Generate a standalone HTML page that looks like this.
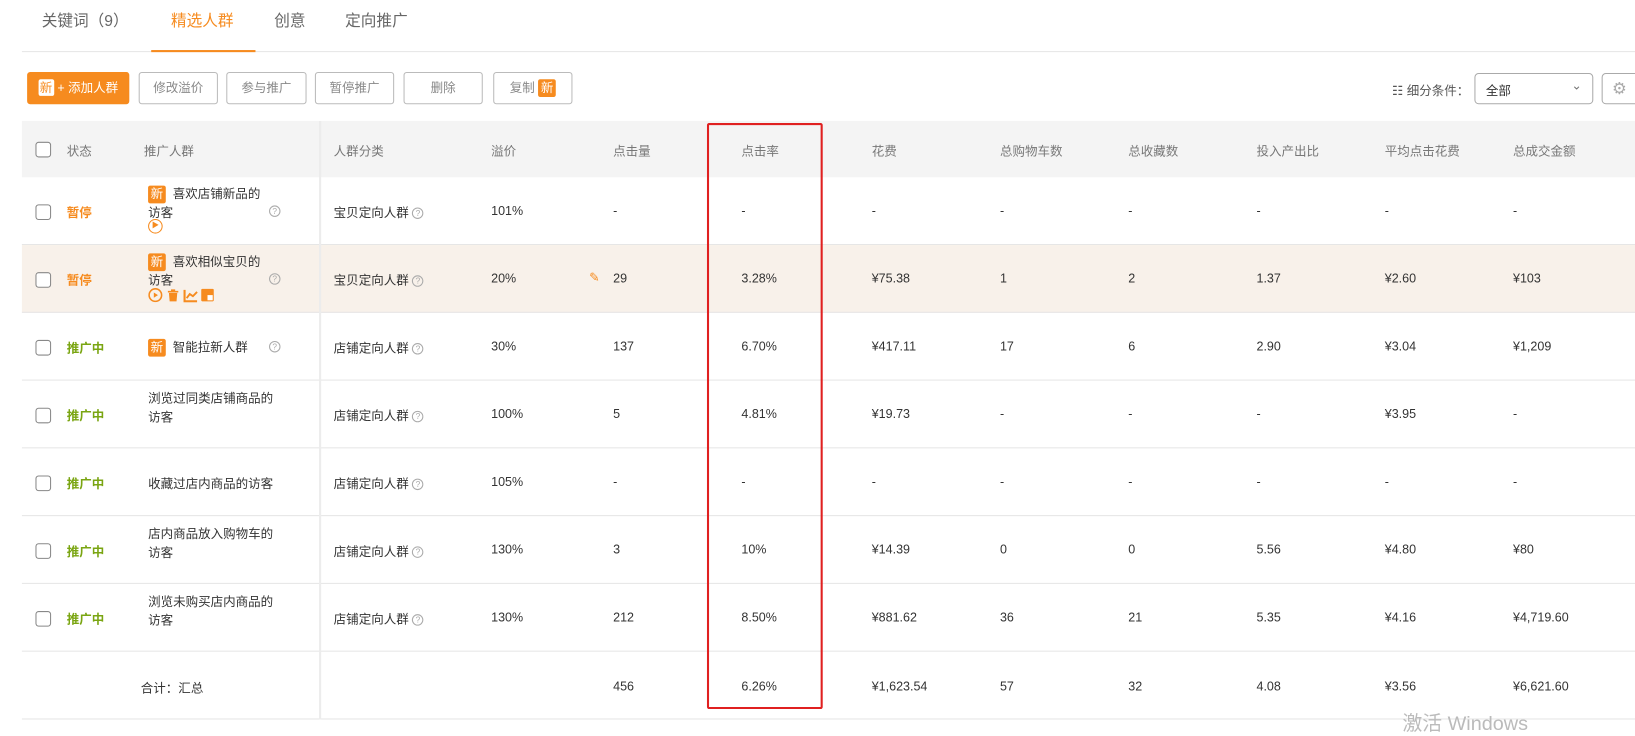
<!DOCTYPE html>
<html><head><meta charset="utf-8"><style>
*{margin:0;padding:0;box-sizing:border-box}
body{width:1635px;height:735px;background:#fff;font-family:"Liberation Sans","Noto Sans CJK SC",sans-serif;font-size:12px;color:#333;position:relative;overflow:hidden}
#w{position:absolute;left:0;top:0;width:1568px;height:705px;transform:scale(1.04273);transform-origin:0 0}
.a{position:absolute;white-space:nowrap}
.tab{top:9px;font-size:15px;color:#666}
.btn{position:absolute;top:69px;height:31px;border:1px solid #bbb;border-radius:3px;color:#888;font-size:12px;text-align:center;line-height:29px}
.new{display:inline-block;background:#f68b1f;color:#fff;width:17px;height:17px;line-height:17px;text-align:center;font-size:12px;border-radius:2px}
.cb{position:absolute;left:34px;width:15px;height:15px;border:1px solid #888;border-radius:3px;background:#fff}
.row{position:absolute;left:21px;right:0;height:65px;border-bottom:1px solid #e6e6e6}
.q{display:inline-block;width:11px;height:11px;border:1px solid #aaa;border-radius:50%;font-size:8px;line-height:9px;text-align:center;color:#aaa;vertical-align:1px}
.pause{color:#f68b1f;font-weight:bold}
.on{color:#7aa512;font-weight:bold}
.h{color:#777}
</style></head><body><div id="w">
<div class="a tab" style="left:40px">关键词（9）</div>
<div class="a tab" style="left:164px;color:#f68b1f">精选人群</div>
<div class="a tab" style="left:263px">创意</div>
<div class="a tab" style="left:331px">定向推广</div>
<div class="a" style="left:21px;right:0;top:49px;height:1px;background:#e6e6e6"></div>
<div class="a" style="left:145px;width:100px;top:48px;height:2px;background:#f68b1f"></div>

<div class="btn" style="left:26px;width:98px;background:#f68b1f;border-color:#f68b1f;color:#fff"><span class="new" style="background:#fff;color:#f68b1f;width:15px;height:16px;line-height:16px">新</span> + 添加人群</div>
<div class="btn" style="left:133px;width:76px">修改溢价</div>
<div class="btn" style="left:217px;width:77px">参与推广</div>
<div class="btn" style="left:302px;width:76px">暂停推广</div>
<div class="btn" style="left:387px;width:76px">删除</div>
<div class="btn" style="left:473px;width:76px">复制 <span class="new">新</span></div>

<div class="a" style="left:1335px;top:78px;color:#555">☷ 细分条件：</div>
<div class="a" style="left:1414px;top:70px;width:114px;height:30px;border:1px solid #aaa;border-radius:4px;padding:7px 10px;color:#333">全部<span style="position:absolute;right:10px;top:4px;color:#777">⌄</span></div>
<div class="a" style="left:1536px;top:70px;width:40px;height:30px;border:1px solid #aaa;border-radius:4px;color:#aaa;font-size:16px;padding:4px 9px">⚙</div>

<div class="a" style="left:21px;right:0;top:116px;height:54px;background:#f4f4f4"></div>
<div class="cb" style="top:136px"></div>
<div class="a h" style="left:64px;top:136px">状态</div>
<div class="a h" style="left:138px;top:136px">推广人群</div>
<div class="a h" style="left:320px;top:136px">人群分类</div>
<div class="a h" style="left:471px;top:136px">溢价</div>
<div class="a h" style="left:588px;top:136px">点击量</div>
<div class="a h" style="left:711px;top:136px">点击率</div>
<div class="a h" style="left:836px;top:136px">花费</div>
<div class="a h" style="left:959px;top:136px">总购物车数</div>
<div class="a h" style="left:1082px;top:136px">总收藏数</div>
<div class="a h" style="left:1205px;top:136px">投入产出比</div>
<div class="a h" style="left:1328px;top:136px">平均点击花费</div>
<div class="a h" style="left:1451px;top:136px">总成交金额</div>

<div class="row" style="top:170px"></div>
<div class="row" style="top:235px;background:#f8f1ea"></div>
<div class="row" style="top:300px"></div>
<div class="row" style="top:365px"></div>
<div class="row" style="top:430px"></div>
<div class="row" style="top:495px"></div>
<div class="row" style="top:560px"></div>
<div class="row" style="top:625px"></div>
<div class="a" style="left:306px;top:116px;width:2px;height:574px;background:#ececec"></div>

<div class="cb" style="top:196px"></div>
<div class="a pause" style="left:64px;top:195px">暂停</div>
<div class="a" style="left:142px;top:177px"><span class="new">新</span>&nbsp; 喜欢店铺新品的</div>
<div class="a" style="left:142px;top:195px">访客</div>
<div class="a" style="left:142px;top:210px;width:14px;height:14px;border:1.5px solid #f68b1f;border-radius:50%;color:#f68b1f;font-size:7px;line-height:11px;text-align:center">▶</div>
<div class="a" style="left:258px;top:195px"><span class="q">?</span></div>
<div class="a" style="left:320px;top:195px">宝贝定向人群 <span class="q">?</span></div>
<div class="a" style="left:471px;top:195px">101%</div>
<div class="a" style="left:588px;top:195px">-</div><div class="a" style="left:711px;top:195px">-</div><div class="a" style="left:836px;top:195px">-</div><div class="a" style="left:959px;top:195px">-</div><div class="a" style="left:1082px;top:195px">-</div><div class="a" style="left:1205px;top:195px">-</div><div class="a" style="left:1328px;top:195px">-</div><div class="a" style="left:1451px;top:195px">-</div>

<div class="cb" style="top:261px"></div>
<div class="a pause" style="left:64px;top:260px">暂停</div>
<div class="a" style="left:142px;top:242px"><span class="new">新</span>&nbsp; 喜欢相似宝贝的</div>
<div class="a" style="left:142px;top:260px">访客</div>
<div class="a" style="left:142px;top:276px">
<svg width="70" height="14" viewBox="0 0 70 14"><circle cx="7" cy="7" r="6" fill="none" stroke="#f68b1f" stroke-width="1.5"/><path d="M5.5 4.5L9.5 7L5.5 9.5Z" fill="#f68b1f"/><path d="M19 3h10v1.5H19zM22 1.5h4v1.5h-4zM20 5h8l-0.7 8h-6.6z" fill="#f68b1f"/><path d="M35 2v11h12" fill="none" stroke="#f68b1f" stroke-width="2"/><path d="M37 10l3-4 3 2 4-4" fill="none" stroke="#f68b1f" stroke-width="1.8"/><rect x="51" y="1" width="12" height="12" rx="1" fill="#f68b1f"/><rect x="57" y="7" width="5" height="5" fill="#fff"/></svg></div>
<div class="a" style="left:258px;top:260px"><span class="q">?</span></div>
<div class="a" style="left:320px;top:260px">宝贝定向人群 <span class="q">?</span></div>
<div class="a" style="left:471px;top:260px">20%</div>
<div class="a" style="left:565px;top:259px;color:#f68b1f">✎</div>
<div class="a" style="left:588px;top:260px">29</div><div class="a" style="left:711px;top:260px">3.28%</div><div class="a" style="left:836px;top:260px">¥75.38</div><div class="a" style="left:959px;top:260px">1</div><div class="a" style="left:1082px;top:260px">2</div><div class="a" style="left:1205px;top:260px">1.37</div><div class="a" style="left:1328px;top:260px">¥2.60</div><div class="a" style="left:1451px;top:260px">¥103</div>

<div class="cb" style="top:326px"></div>
<div class="a on" style="left:64px;top:325px">推广中</div>
<div class="a" style="left:142px;top:324px"><span class="new">新</span>&nbsp; 智能拉新人群</div>
<div class="a" style="left:258px;top:325px"><span class="q">?</span></div>
<div class="a" style="left:320px;top:325px">店铺定向人群 <span class="q">?</span></div>
<div class="a" style="left:471px;top:325px">30%</div>
<div class="a" style="left:588px;top:325px">137</div><div class="a" style="left:711px;top:325px">6.70%</div><div class="a" style="left:836px;top:325px">¥417.11</div><div class="a" style="left:959px;top:325px">17</div><div class="a" style="left:1082px;top:325px">6</div><div class="a" style="left:1205px;top:325px">2.90</div><div class="a" style="left:1328px;top:325px">¥3.04</div><div class="a" style="left:1451px;top:325px">¥1,209</div>

<div class="cb" style="top:391px"></div>
<div class="a on" style="left:64px;top:390px">推广中</div>
<div class="a" style="left:142px;top:373px">浏览过同类店铺商品的</div>
<div class="a" style="left:142px;top:391px">访客</div>
<div class="a" style="left:320px;top:390px">店铺定向人群 <span class="q">?</span></div>
<div class="a" style="left:471px;top:390px">100%</div>
<div class="a" style="left:588px;top:390px">5</div><div class="a" style="left:711px;top:390px">4.81%</div><div class="a" style="left:836px;top:390px">¥19.73</div><div class="a" style="left:959px;top:390px">-</div><div class="a" style="left:1082px;top:390px">-</div><div class="a" style="left:1205px;top:390px">-</div><div class="a" style="left:1328px;top:390px">¥3.95</div><div class="a" style="left:1451px;top:390px">-</div>

<div class="cb" style="top:456px"></div>
<div class="a on" style="left:64px;top:455px">推广中</div>
<div class="a" style="left:142px;top:455px">收藏过店内商品的访客</div>
<div class="a" style="left:320px;top:455px">店铺定向人群 <span class="q">?</span></div>
<div class="a" style="left:471px;top:455px">105%</div>
<div class="a" style="left:588px;top:455px">-</div><div class="a" style="left:711px;top:455px">-</div><div class="a" style="left:836px;top:455px">-</div><div class="a" style="left:959px;top:455px">-</div><div class="a" style="left:1082px;top:455px">-</div><div class="a" style="left:1205px;top:455px">-</div><div class="a" style="left:1328px;top:455px">-</div><div class="a" style="left:1451px;top:455px">-</div>

<div class="cb" style="top:521px"></div>
<div class="a on" style="left:64px;top:520px">推广中</div>
<div class="a" style="left:142px;top:503px">店内商品放入购物车的</div>
<div class="a" style="left:142px;top:521px">访客</div>
<div class="a" style="left:320px;top:520px">店铺定向人群 <span class="q">?</span></div>
<div class="a" style="left:471px;top:520px">130%</div>
<div class="a" style="left:588px;top:520px">3</div><div class="a" style="left:711px;top:520px">10%</div><div class="a" style="left:836px;top:520px">¥14.39</div><div class="a" style="left:959px;top:520px">0</div><div class="a" style="left:1082px;top:520px">0</div><div class="a" style="left:1205px;top:520px">5.56</div><div class="a" style="left:1328px;top:520px">¥4.80</div><div class="a" style="left:1451px;top:520px">¥80</div>

<div class="cb" style="top:586px"></div>
<div class="a on" style="left:64px;top:585px">推广中</div>
<div class="a" style="left:142px;top:568px">浏览未购买店内商品的</div>
<div class="a" style="left:142px;top:586px">访客</div>
<div class="a" style="left:320px;top:585px">店铺定向人群 <span class="q">?</span></div>
<div class="a" style="left:471px;top:585px">130%</div>
<div class="a" style="left:588px;top:585px">212</div><div class="a" style="left:711px;top:585px">8.50%</div><div class="a" style="left:836px;top:585px">¥881.62</div><div class="a" style="left:959px;top:585px">36</div><div class="a" style="left:1082px;top:585px">21</div><div class="a" style="left:1205px;top:585px">5.35</div><div class="a" style="left:1328px;top:585px">¥4.16</div><div class="a" style="left:1451px;top:585px">¥4,719.60</div>

<div class="a" style="left:135px;top:651px">合计：汇总</div>
<div class="a" style="left:588px;top:651px">456</div><div class="a" style="left:711px;top:651px">6.26%</div><div class="a" style="left:836px;top:651px">¥1,623.54</div><div class="a" style="left:959px;top:651px">57</div><div class="a" style="left:1082px;top:651px">32</div><div class="a" style="left:1205px;top:651px">4.08</div><div class="a" style="left:1328px;top:651px">¥3.56</div><div class="a" style="left:1451px;top:651px">¥6,621.60</div>

<div class="a" style="left:678px;top:118px;width:111px;height:562px;border:2px solid #e02020;border-radius:2px"></div>
<div class="a" style="left:1345px;top:679px;font-size:19px;color:#bbb">激活 Windows</div>
</div></body></html>
